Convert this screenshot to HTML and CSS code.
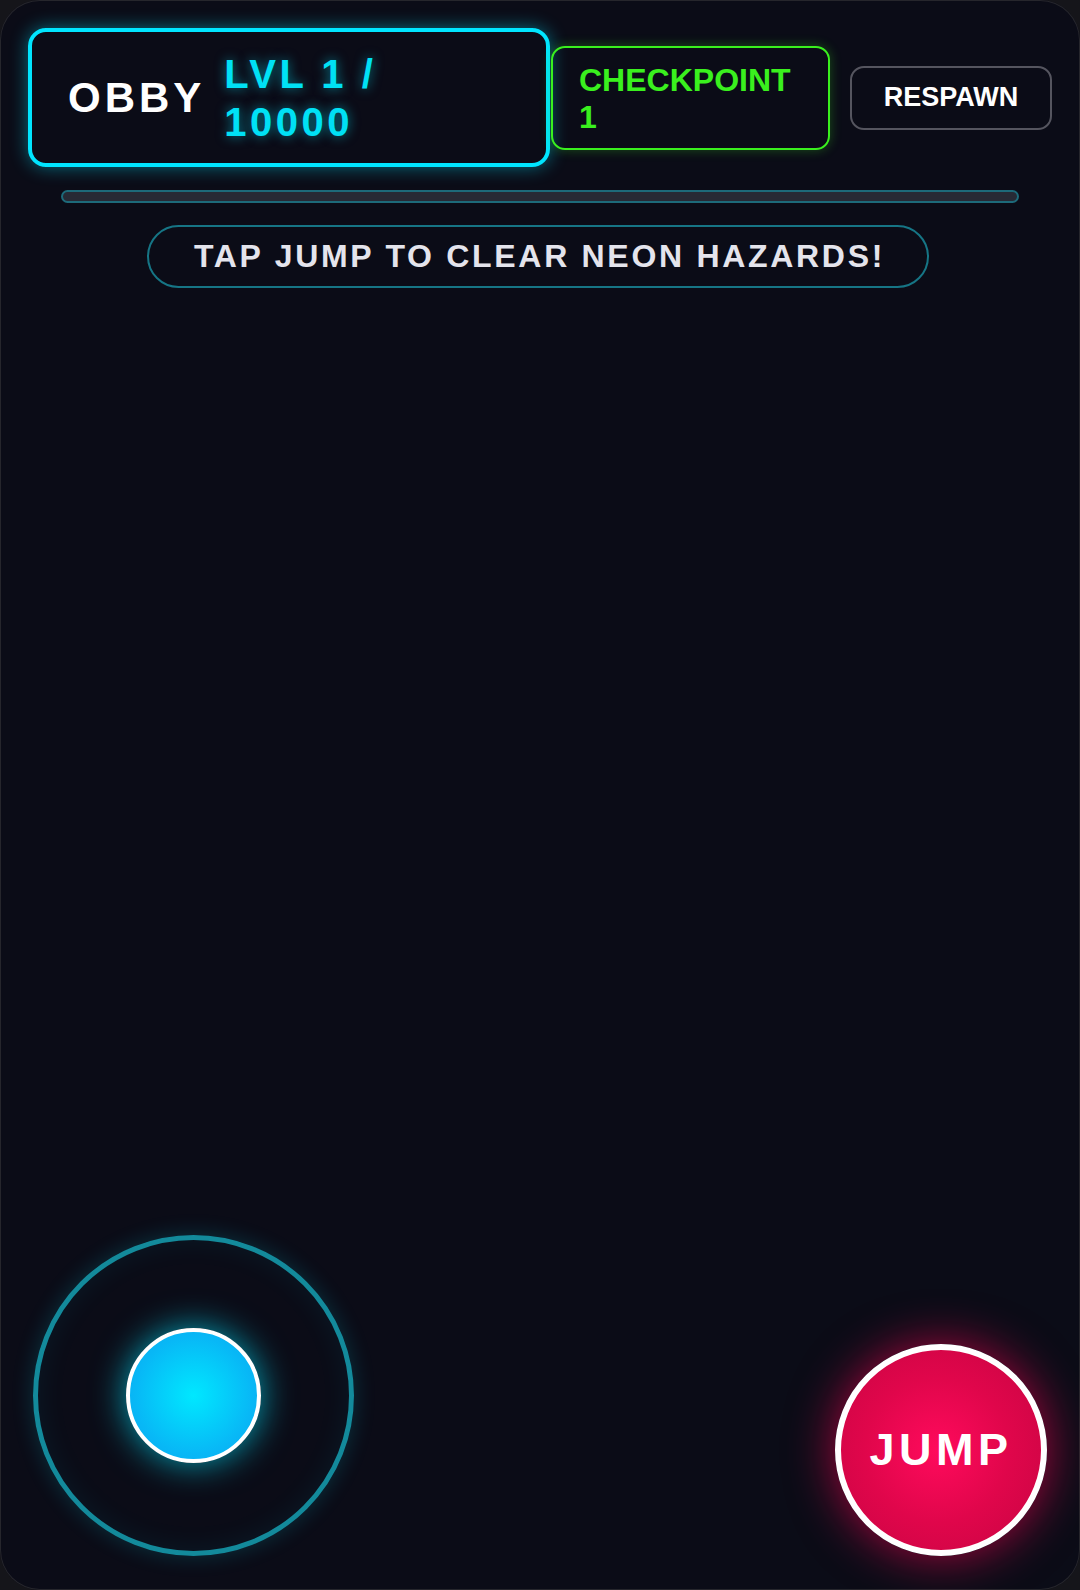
FILE: index.html
```html
<!DOCTYPE html>
<html lang="en">
	<head>
		<meta charset="UTF-8">
		<meta name="viewport" content="width=device-width, initial-scale=1.0">
		<title>Neon Obby</title>
		<link rel="stylesheet" href="styles.css">
	</head>
	<body>
		<div class="app">
			<div class="topbar">
				<div class="hud">
					<span class="title">OBBY</span>
					<span class="level" id="level">LVL 1 / 10000</span>
				</div>
				<div class="checkpoint" id="checkpoint">CHECKPOINT 1</div>
				<button class="respawn">RESPAWN</button>
			</div>
			<div class="progress"><div class="progress-fill"></div></div>
			<div class="hint-row">
				<div class="hint">TAP JUMP TO CLEAR NEON HAZARDS!</div>
			</div>
			<div class="stage"></div>
			<div class="controls">
				<div class="joystick">
					<div class="knob"></div>
				</div>
				<button class="jump">JUMP</button>
			</div>
		</div>
	</body>
</html>
```

FILE: styles.css
```css
body{
	margin:0;
	background:#15151a;
	font-family:"Liberation Sans",Arial,sans-serif;
}

.app{
	height:1590px;
	box-sizing:border-box;
	padding:28px;
	display:flex;
	flex-direction:column;
	background:#0b0c17;
	border-radius:40px;
	box-shadow:inset 0 0 0 1px #26262c;
}

/*顶部栏*/
.topbar{
	display:flex;
	align-items:center;
}

.hud{
	width:522px;
	height:139px;
	box-sizing:border-box;
	border:4px solid #00e5ff;
	border-radius:18px;
	box-shadow:0 0 18px rgba(0,229,255,0.45);
	display:flex;
	align-items:center;
	padding-left:36px;
}

.title{
	color:#ffffff;
	font-size:42px;
	font-weight:bold;
	letter-spacing:4px;
	margin-right:19px;
}

.level{
	color:#00e1f5;
	font-size:40px;
	font-weight:bold;
	letter-spacing:3.5px;
	line-height:48px;
	width:180px;
	text-shadow:0 0 12px rgba(0,229,255,0.55);
}

.checkpoint{
	width:279px;
	height:104px;
	box-sizing:border-box;
	margin-left:1px;
	margin-right:20px;
	padding:14px 26px;
	border:2px solid #3af01e;
	border-radius:14px;
	box-shadow:0 0 12px rgba(58,240,30,0.3);
	color:#3af01e;
	font-size:32px;
	font-weight:bold;
}

.respawn{
	width:202px;
	height:64px;
	border:2px solid #55555f;
	border-radius:14px;
	background:#0b0c17;
	color:#ffffff;
	font-family:"Liberation Sans",Arial,sans-serif;
	font-size:27px;
	font-weight:bold;
	padding:0;
	cursor:pointer;
}

/*进度条*/
.progress{
	margin:23px 33px 0;
	height:13px;
	box-sizing:border-box;
	border:2px solid #1d6a7a;
	border-radius:7px;
	background:#272a35;
}

.progress-fill{
	width:0;
	height:100%;
}

.hint-row{
	display:flex;
	justify-content:center;
	margin-top:22px;
}

.hint{
	padding:11px 42px 11px 45px;
	border:2px solid #167585;
	border-radius:32px;
	color:#e4e4ec;
	font-size:32px;
	font-weight:bold;
	letter-spacing:2.7px;
	margin-right:4px;
}

.stage{
	flex-grow:1;
}

/*控制区*/
.controls{
	display:flex;
	justify-content:space-between;
	align-items:flex-end;
	padding:0 5px 6px;
}

.joystick{
	width:321px;
	height:321px;
	box-sizing:border-box;
	border:5px solid #138a9b;
	border-radius:50%;
	box-shadow:0 0 22px rgba(0,229,255,0.18),inset 0 0 30px rgba(0,229,255,0.07);
	display:flex;
	justify-content:center;
	align-items:center;
}

.knob{
	width:135px;
	height:135px;
	box-sizing:border-box;
	border:4px solid #ffffff;
	border-radius:50%;
	background:radial-gradient(circle,#00e8ff 0%,#08b8f6 65%,#0aa8ee 100%);
	box-shadow:0 0 34px rgba(0,229,255,0.7);
}

.jump{
	width:212px;
	height:212px;
	box-sizing:border-box;
	border:6px solid #ffffff;
	border-radius:50%;
	background:radial-gradient(circle at 48% 50%,#ff0a5c 0%,#e0064b 50%,#c70442 100%);
	box-shadow:0 0 48px rgba(255,0,85,0.65);
	color:#ffffff;
	font-family:"Liberation Sans",Arial,sans-serif;
	font-size:45px;
	font-weight:bold;
	letter-spacing:4.5px;
	padding:0;
	cursor:pointer;
}
```
